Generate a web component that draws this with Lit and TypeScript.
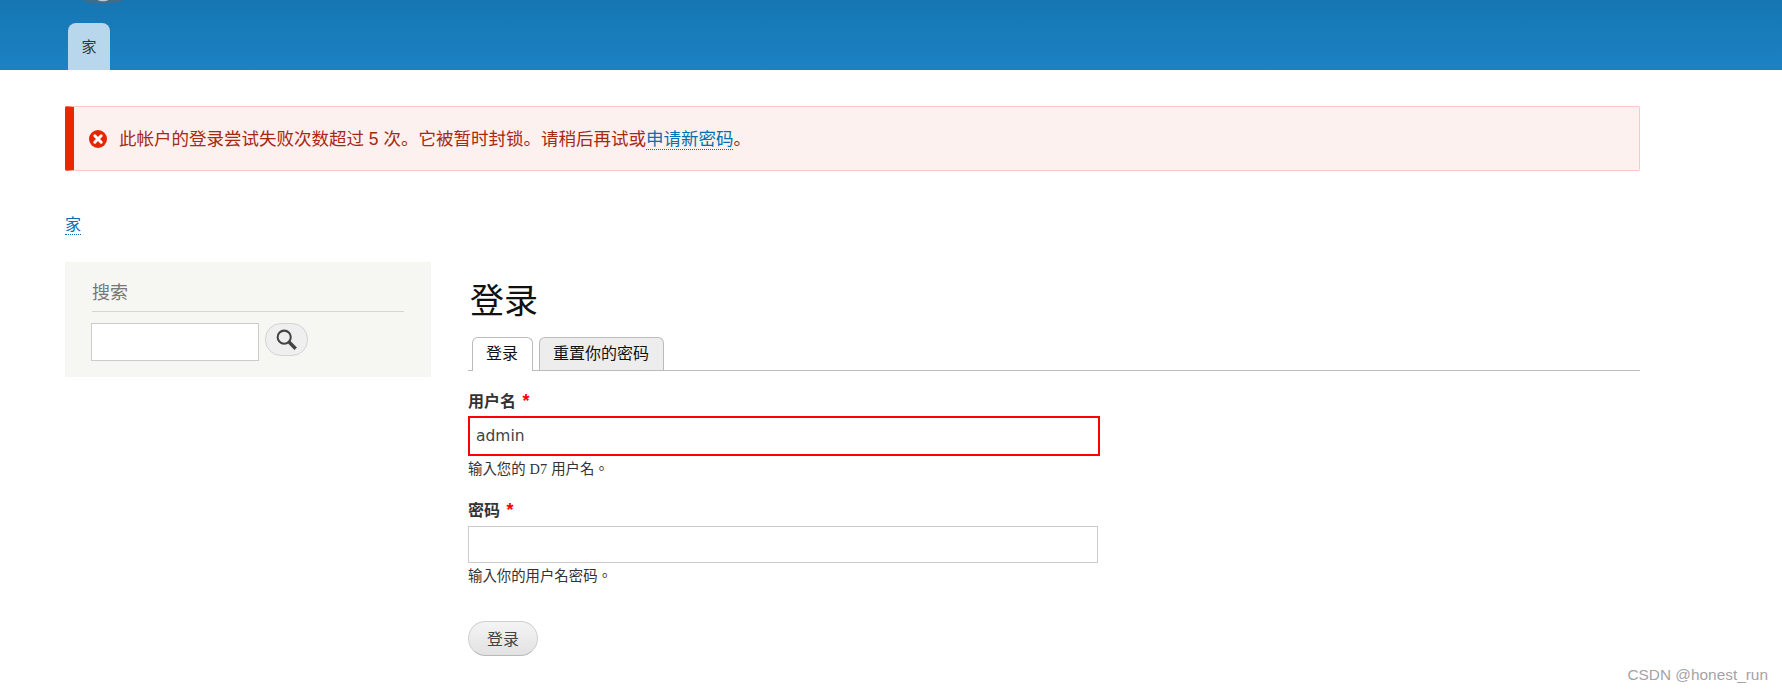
import { LitElement, html, css } from "lit";
import { customElement } from "lit/decorators.js";

@customElement("app-root")
export class AppRoot extends LitElement {
  static styles = css`
    :host {
      display: block;
      height: 692px;
      overflow: hidden;
      position: relative;
      background: #fff;
      font-family: "Liberation Sans", "Noto Sans CJK SC", sans-serif;
      font-size: 16px;
      color: #3b3b3b;
    }
    * { box-sizing: border-box; }
    a { color: #0071b3; text-decoration: none; border-bottom: 1px dotted #0071b3; }
    .header {
      position: relative;
      height: 70px;
      padding: 23px 0 0 68px;
      background: linear-gradient(#1576b3, #1c82c3);
    }
    .logo { position: absolute; left: 76px; top: -1px; }
    .navtab {
      width: 42px;
      height: 47px;
      padding-top: 12px;
      text-align: center;
      background: #b9d7ec;
      border-radius: 8px 8px 0 0;
      color: #333;
      font-size: 15px;
    }
    .main { padding: 36px 142px 0 65px; }
    .alert {
      display: flex;
      align-items: center;
      gap: 12px;
      height: 65px;
      padding-left: 15px;
      background: #fcf1ef;
      border: 1px solid #f9c9bf;
      border-left: 9px solid #ea2800;
      border-radius: 2px;
      color: #a82812;
      font-size: 17.5px;
    }
    .alert svg { display: block; flex: none; }
    .alert span { position: relative; top: -1px; }
    .crumb { margin-top: 44px; height: 19px; line-height: 19px; font-size: 16px; }
    .crumb a { display: inline-block; line-height: 18px; }
    .cols { display: flex; margin-top: 28px; }
    .side {
      flex: none;
      width: 366px;
      height: 115px;
      padding: 20px 27px 0 27px;
      background: #f6f6f2;
    }
    .side h2 {
      margin: 0;
      height: 30px;
      font-size: 18px;
      line-height: 22px;
      font-weight: 400;
      color: #777;
      border-bottom: 1px solid #d6d6d2;
    }
    .search { display: flex; gap: 6px; margin-top: 11px; margin-left: -1px; }
    .search .box {
      width: 168px;
      height: 38px;
      background: #fff;
      border: 1px solid #ccc;
    }
    .search button {
      display: flex;
      align-items: center;
      justify-content: center;
      width: 43px;
      height: 33px;
      padding: 0;
      background: #efefef;
      border: 1px solid #d4d4d4;
      border-radius: 16px;
    }
    .content { flex: 1; margin-left: 37px; }
    h1 {
      margin: 16px 0 0 2px;
      height: 44px;
      font-size: 34px;
      line-height: 46px;
      font-weight: 400;
      color: #111;
    }
    .tabs {
      display: flex;
      gap: 6px;
      height: 34px;
      margin-top: 15px;
      padding-left: 4px;
      border-bottom: 1px solid #bbb;
    }
    .tab {
      height: 33px;
      padding: 0 14px 0 13px;
      line-height: 32px;
      color: #111;
      background: #ededed;
      border: 1px solid #bbb;
      border-bottom: 0;
      border-radius: 6px 6px 0 0;
    }
    .tab.active { height: 34px; background: #fff; }
    .label {
      margin-top: 20px;
      height: 20px;
      line-height: 20px;
      font-weight: 700;
      color: #333;
    }
    .req { color: #f00; margin-left: 2px; font-size: 18px; }
    .field {
      margin-top: 5px;
      width: 632px;
      height: 40px;
      padding-left: 6px;
      line-height: 36px;
      border: 2px solid #f00;
      background: #fff;
      font-family: "DejaVu Sans", sans-serif;
      font-size: 15.5px;
      color: #444;
    }
    .field.plain { margin-top: 6px; width: 630px; height: 37px; border: 1px solid #ccc; }
    .help {
      margin-top: 4px;
      height: 18px;
      line-height: 18px;
      font-family: "Liberation Sans", "Noto Sans CJK TC", sans-serif;
      font-size: 14.4px;
      color: #333;
    }
    .help .latin { font-family: "Liberation Serif", serif; }
    .label.second { margin-top: 22px; }
    .submit {
      display: block;
      margin-top: 36px;
      width: 70px;
      height: 35px;
      padding: 0 0 2px;
      font: inherit;
      color: #444;
      background: linear-gradient(#f4f4f4, #e2e2e2);
      border: 1px solid #d0d0d0;
      border-bottom-color: #b8b8b8;
      border-radius: 18px;
    }
    .mark {
      position: absolute;
      right: 14px;
      top: 667px;
      font-size: 15.4px;
      line-height: 16px;
      color: #a4a4a4;
    }
  `;

  render() {
    return html`
      <div class="header">
        <svg class="logo" width="56" height="6" viewBox="0 0 56 6">
          <path d="M4 0C10 4 18 5 27 5S44 4 50 0Z" fill="#3c6d8f" />
          <path d="M20 0C23 3 31 3 34 0Z" fill="#b9cbd8" />
        </svg>
        <div class="navtab">家</div>
      </div>
      <div class="main">
        <div class="alert">
          <svg width="18" height="18" viewBox="0 0 18 18">
            <circle cx="9" cy="9" r="9" fill="#e62600" />
            <path d="M5.8 5.8L12.2 12.2M12.2 5.8L5.8 12.2" stroke="#fff" stroke-width="3" stroke-linecap="round" />
          </svg>
          <span>此帐户的登录尝试失败次数超过 5 次。它被暂时封锁。请稍后再试或<a>申请新密码</a>。</span>
        </div>
        <div class="crumb"><a>家</a></div>
        <div class="cols">
          <aside class="side">
            <h2>搜索</h2>
            <div class="search">
              <div class="box"></div>
              <button aria-label="搜索">
                <svg width="23" height="23" viewBox="0 0 20 20" fill="none" stroke="#444">
                  <circle cx="8" cy="8" r="5.7" stroke-width="1.8" />
                  <path d="M12 12L18 18" stroke-width="3" />
                </svg>
              </button>
            </div>
          </aside>
          <div class="content">
            <h1>登录</h1>
            <div class="tabs">
              <div class="tab active">登录</div>
              <div class="tab">重置你的密码</div>
            </div>
            <div class="label">用户名 <span class="req">*</span></div>
            <div class="field">admin</div>
            <div class="help">输入您的 <span class="latin">D7</span> 用户名。</div>
            <div class="label second">密码 <span class="req">*</span></div>
            <div class="field plain"></div>
            <div class="help">输入你的用户名密码。</div>
            <button class="submit">登录</button>
          </div>
        </div>
      </div>
      <div class="mark">CSDN @honest_run</div>
    `;
  }
}
